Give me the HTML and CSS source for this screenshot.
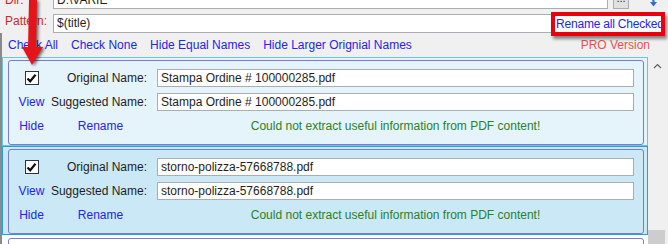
FILE: index.html
```html
<!DOCTYPE html>
<html lang="en">
<head>
    <meta charset="UTF-8">
    <title>PDF Renamer</title>
    <link rel="stylesheet" href="styles.css">
</head>
<body>
<div class="window">
    <!-- directory row, scrolled partly out of view -->
    <div class="top-row dir-row">
        <span class="label">Dir:</span>
        <div class="field dir-field">D:\VARIE</div>
        <span class="browse">...</span>
        <svg class="go-icon" width="16" height="10" viewBox="0 0 16 10">
            <path d="M1 1.5 H8 Q10.5 1.5 10.5 4.5 V6" fill="none" stroke="#2f6fc6" stroke-width="2"/>
            <polygon points="7,5 14,5 10.5,9.5" fill="#2f6fc6"/>
        </svg>
    </div>

    <div class="top-row pattern-row">
        <span class="label">Pattern:</span>
        <div class="field pattern-field">$(title)</div>
        <a class="rename-all" href="#">Rename all Checked</a>
    </div>

    <div class="lower">
        <div class="links">
            <a href="#">Check All</a>
            <a href="#">Check None</a>
            <a href="#">Hide Equal Names</a>
            <a href="#">Hide Larger Orignial Names</a>
            <span class="pro">PRO Version</span>
        </div>

        <div class="list-wrap">
            <div class="list">
                <div class="item hover">
                    <div class="card">
                        <span class="check"><svg width="11" height="11" viewBox="0 0 11 11"><path d="M1.5 5.5 L4.2 8.3 L9.5 1.8" fill="none" stroke="#111" stroke-width="2.2"/></svg></span>
                        <span class="name-label">Original Name:</span>
                        <div class="field">Stampa Ordine # 100000285.pdf</div>

                        <a class="cell-link" href="#">View</a>
                        <span class="name-label">Suggested Name:</span>
                        <div class="field">Stampa Ordine # 100000285.pdf</div>

                        <a class="cell-link" href="#">Hide</a>
                        <a class="cell-link" href="#">Rename</a>
                        <span class="msg">Could not extract useful information from PDF content!</span>
                    </div>
                </div>

                <div class="item selected">
                    <div class="card">
                        <span class="check"><svg width="11" height="11" viewBox="0 0 11 11"><path d="M1.5 5.5 L4.2 8.3 L9.5 1.8" fill="none" stroke="#111" stroke-width="2.2"/></svg></span>
                        <span class="name-label">Original Name:</span>
                        <div class="field">storno-polizza-57668788.pdf</div>

                        <a class="cell-link" href="#">View</a>
                        <span class="name-label">Suggested Name:</span>
                        <div class="field">storno-polizza-57668788.pdf</div>

                        <a class="cell-link" href="#">Hide</a>
                        <a class="cell-link" href="#">Rename</a>
                        <span class="msg">Could not extract useful information from PDF content!</span>
                    </div>
                </div>

                <div class="item">
                    <div class="card">
                        <span class="check"></span>
                        <span class="name-label">Original Name:</span>
                        <div class="field"></div>
                    </div>
                </div>
            </div>

            <div class="scrollbar">
                <div class="scroll-up">
                    <svg width="9" height="6" viewBox="0 0 9 6"><path d="M1 5 L4.5 1.5 L8 5" fill="none" stroke="#606060" stroke-width="1.2"/></svg>
                </div>
                <div class="thumb"></div>
            </div>
        </div>
    </div>

    <!-- annotation arrow drawn over the form -->
    <svg class="arrow" width="50" height="70" viewBox="0 0 50 70">
        <polygon points="29,0 37,0 36,49 28,49" fill="#e5141b"/>
        <polygon points="22,47 43,47 32,65" fill="#e5141b"/>
    </svg>
</div>
</body>
</html>
```

FILE: styles.css
```css
html, body {
    margin: 0;
    padding: 0;
}

.window {
    position: relative;
    width: 668px;
    height: 244px;
    overflow: hidden;
    background-color: #f0f0f0;
    font-family: "Liberation Sans", Arial, sans-serif;
    font-size: 12px;
    color: #1e1e1e;
}

a {
    color: #2424f0;
    text-decoration: none;
}

.top-row {
    display: flex;
    align-items: center;
    padding-left: 5px;
}

.label {
    width: 48px;
    color: #cc2a2a;
}

.field {
    box-sizing: border-box;
    height: 18px;
    line-height: 16px;
    padding: 0 3px;
    background-color: #ffffff;
    border: 1px solid #abadb3;
    white-space: nowrap;
    overflow: hidden;
}

.dir-row {
    height: 18px;
    margin-top: -9px;
}

.dir-field {
    width: 555px;
}

.browse {
    box-sizing: border-box;
    width: 16px;
    height: 18px;
    margin-left: 5px;
    background-color: #e1e1e1;
    border: 1px solid #adadad;
    text-align: center;
    line-height: 12px;
    font-size: 11px;
}

.go-icon {
    margin-left: 14px;
    align-self: flex-end;
    margin-bottom: 2px;
}

.pattern-row {
    height: 19px;
    margin-top: 5px;
    align-items: flex-start;
}

.pattern-field {
    flex: 1;
    height: 19px;
    line-height: 17px;
    margin-right: -2px;
}

.rename-all {
    box-sizing: border-box;
    width: 114px;
    height: 24px;
    margin-top: -2px;
    margin-right: 3px;
    padding: 0 0 0 1px;
    border: 4px solid #e8000e;
    background-color: #ffffff;
    line-height: 16px;
    letter-spacing: -0.2px;
    white-space: nowrap;
    overflow: hidden;
    box-shadow: 2px 3px 3px rgba(0, 0, 0, 0.45);
    position: relative;
}

.lower {
    border-left: 2px solid #8a8a8a;
}

.links {
    display: flex;
    align-items: center;
    gap: 13px;
    height: 24px;
    padding-left: 6px;
    line-height: 16px;
}

.links .pro {
    margin-left: auto;
    margin-right: 18px;
    color: #ef4f4f;
}

.list-wrap {
    display: flex;
    height: 200px;
}

.list {
    flex: 1;
    background-color: #ffffff;
}

.item {
    border: 1px solid transparent;
    padding: 2px 3px 0 5px;
}

.item.hover {
    background-color: #e5f3fb;
    border-color: #70c0e7;
}

.item.selected {
    background-color: #cbe8f6;
    border-color: #26a0da;
}

.card {
    display: grid;
    grid-template-columns: 45px 93px 1fr;
    grid-template-rows: 18px 18px 18px;
    row-gap: 6px;
    align-items: center;
    padding: 8px 9px 9px 0;
    border: 1px solid #7b7bc8;
    border-radius: 3px;
}

.card .field {
    margin-left: 10px;
}

.check {
    justify-self: center;
    box-sizing: border-box;
    width: 14px;
    height: 14px;
    border: 1px solid #333333;
    background-color: #ffffff;
    display: flex;
    align-items: center;
    justify-content: center;
}

.name-label {
    justify-self: end;
    white-space: nowrap;
    line-height: 18px;
}

.cell-link {
    justify-self: center;
    line-height: 18px;
}

.msg {
    margin-left: 10px;
    text-align: center;
    color: #2a812a;
    line-height: 18px;
    white-space: nowrap;
}

.scrollbar {
    width: 20px;
    display: flex;
    flex-direction: column;
}

.scroll-up {
    flex-shrink: 0;
    height: 17px;
    display: flex;
    align-items: center;
    justify-content: center;
    padding-right: 2px;
}

.thumb {
    flex-shrink: 0;
    width: 17px;
    height: 40px;
    margin-top: 156px;
    background-color: #cdcdcd;
}

.arrow {
    position: absolute;
    top: 0;
    left: 0;
    filter: drop-shadow(2px 1px 1.5px rgba(0, 0, 0, 0.55));
}
```
